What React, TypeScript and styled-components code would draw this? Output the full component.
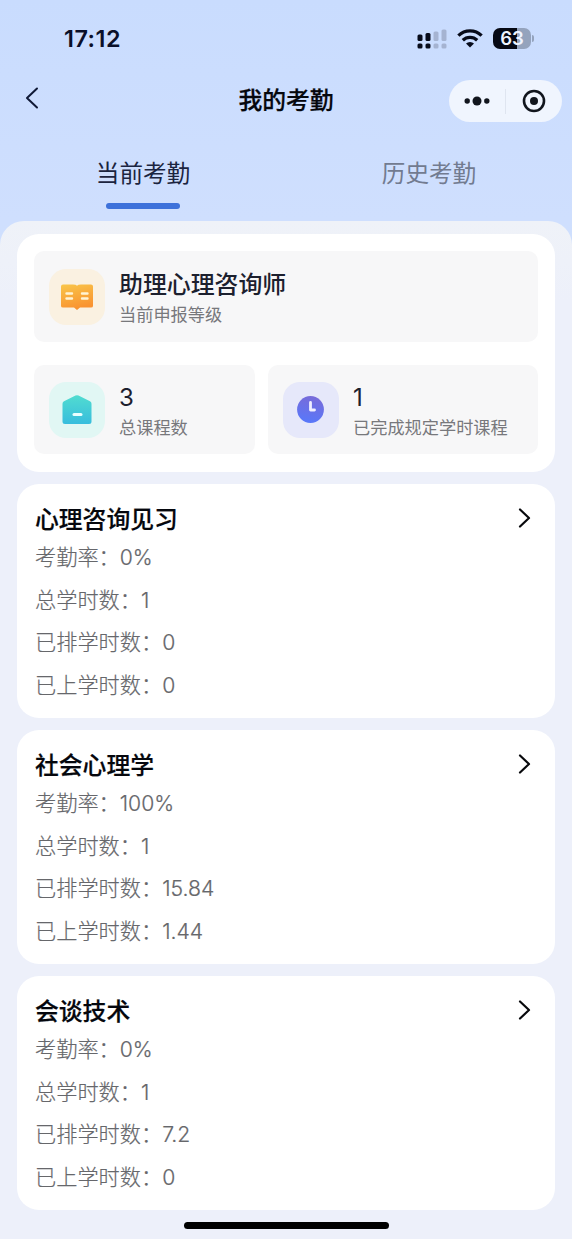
import React from "react";
import styled, { createGlobalStyle } from "styled-components";

const GlobalStyle = createGlobalStyle`
  * { box-sizing: border-box; }
  body {
    margin: 0;
    background: #edf0fa;
    font-family: Inter, "Noto Sans CJK SC", sans-serif;
    color: #05070d;
  }
`;

const Screen = styled.div`
  width: 572px;
  height: 1239px;
  overflow: hidden;
  display: flex;
  flex-direction: column;
  background: linear-gradient(180deg, #c9dcfe 0, #cfdffe 220px, #cfe0fe 260px);
`;

const StatusBar = styled.header`
  height: 76px;
  flex: none;
  display: flex;
  align-items: center;
  justify-content: space-between;
  padding: 1px 38px 0 64px;
`;

const Time = styled.span`
  font-size: 23.4px;
  font-weight: 600;
  letter-spacing: 0.5px;
  color: #0a1029;
`;

const StatusIcons = styled.div`
  display: flex;
  align-items: center;
  gap: 10px;
`;

const NavBar = styled.nav`
  height: 50px;
  flex: none;
  display: grid;
  grid-template-columns: 1fr auto 1fr;
  align-items: center;
  padding: 0 10px 0 24px;
`;

const BackIcon = styled.svg`
  margin-top: -6px;
`;

const PageTitle = styled.h1`
  margin: 0 14px 0 0;
  font-size: 23.8px;
  line-height: 36px;
  font-weight: 500;
  -webkit-text-stroke: 0.25px currentColor;
`;

const Capsule = styled.div`
  justify-self: end;
  width: 113px;
  height: 42px;
  border-radius: 21px;
  background: #f0f5fe;
  display: grid;
  grid-template-columns: 1fr 1px 1fr;
  align-items: center;
  justify-items: center;
`;

const CapsuleDivider = styled.span`
  width: 1px;
  height: 25px;
  background: #dfe5f0;
`;

const Tabs = styled.div`
  height: 95px;
  flex: none;
  display: grid;
  grid-template-columns: 1fr 1fr;
`;

const Tab = styled.div<{ $active?: boolean }>`
  display: flex;
  flex-direction: column;
  align-items: center;
  padding-top: 30px;
  gap: 11px;
  font-size: 23.6px;
  line-height: 36px;
  color: ${(p) => (p.$active ? "#1b2440" : "#727b90")};

  &::after {
    content: "";
    width: 74px;
    height: 6px;
    border-radius: 3px;
    background: ${(p) => (p.$active ? "#3d71da" : "transparent")};
  }
`;

const Panel = styled.main`
  flex: 1;
  display: flex;
  flex-direction: column;
  gap: 12px;
  padding: 13px 17px 0;
  border-radius: 24px 24px 0 0;
  background: linear-gradient(180deg, #eff2f8 0, #edf0fa 80px);
`;

const Card = styled.section`
  flex: none;
  height: 234px;
  border-radius: 22px;
  background: #fff;
  padding: 16px 18px;
`;

const SummaryCard = styled(Card)`
  height: 238px;
  padding: 17px 17px 18px;
  display: grid;
  grid-template-columns: 221px 1fr;
  grid-template-rows: 91px 89px;
  column-gap: 13px;
  row-gap: 23px;
`;

const Tile = styled.div<{ $wide?: boolean }>`
  grid-column: ${(p) => (p.$wide ? "1 / -1" : "auto")};
  display: flex;
  align-items: center;
  gap: 14px;
  padding-left: 15px;
  border-radius: 10px;
  background: #f7f7f8;
`;

const IconBox = styled.div<{ $bg: string }>`
  width: 56px;
  height: 56px;
  flex: none;
  border-radius: 17px;
  background: ${(p) => p.$bg};
  display: flex;
  align-items: center;
  justify-content: center;
`;

const TileText = styled.div`
  display: flex;
  flex-direction: column;
  white-space: nowrap;
  padding-top: 2px;
`;

const TileValue = styled.strong<{ $numeric?: boolean }>`
  font-size: ${(p) => (p.$numeric ? 24 : 23.9)}px;
  font-weight: ${(p) => (p.$numeric ? 400 : 500)};
  line-height: 34px;
  color: #1c202e;
`;

const TileLabel = styled.span`
  font-size: 17.2px;
  line-height: 26px;
  color: #77787c;
`;

const CardHead = styled.div`
  display: flex;
  align-items: center;
  justify-content: space-between;
  height: 36px;
  padding-right: 6px;
`;

const CardTitle = styled.h2`
  margin: 0;
  padding-top: 3px;
  font-size: 23.8px;
  line-height: 36px;
  font-weight: 500;
  -webkit-text-stroke: 0.2px currentColor;
`;

const Row = styled.div`
  height: 42.6px;
  line-height: 42.6px;
  font-size: 21.2px;
  font-weight: 300;
  color: #66676b;
  -webkit-text-stroke: 0.2px currentColor;
  white-space: nowrap;
`;

const HomeIndicator = styled.div`
  width: 205px;
  height: 7px;
  border-radius: 4px;
  background: #000;
  align-self: center;
  flex: none;
`;

const Signal = () => (
  <svg width="30" height="20" viewBox="0 0 30 20">
    <g fill="#070b1a">
      <rect x="0.5" y="5.5" width="5" height="6.5" rx="1.5" />
      <rect x="8.5" y="4" width="5" height="8" rx="1.5" />
      <rect x="0.5" y="14.5" width="5" height="5" rx="1.5" />
      <rect x="8.5" y="14.5" width="5" height="5" rx="1.5" />
    </g>
    <g fill="#a5b3d1">
      <rect x="16.5" y="2.5" width="5" height="9.5" rx="1.5" />
      <rect x="24.5" y="0.5" width="5" height="11.5" rx="1.5" />
      <rect x="16.5" y="14.5" width="5" height="5" rx="1.5" />
      <rect x="24.5" y="14.5" width="5" height="5" rx="1.5" />
    </g>
  </svg>
);

const Wifi = () => (
  <svg width="26" height="19" viewBox="0 0 26 19" fill="none" stroke="#070b1a" strokeWidth="3.3">
    <path d="M1.4 6.6a16.5 16.5 0 0 1 23.2 0" />
    <path d="M5.8 11.2a10.4 10.4 0 0 1 14.4 0" />
    <path d="M13 18.6l-4-4.1a5.8 5.8 0 0 1 8 0z" fill="#070b1a" stroke="none" />
  </svg>
);

const BatteryShell = styled.div`
  display: flex;
  align-items: center;
  gap: 1px;

  &::after {
    content: "";
    width: 2px;
    height: 7px;
    border-radius: 0 2px 2px 0;
    background: #94a3bd;
  }
`;

const BatteryBody = styled.div`
  width: 38px;
  height: 21px;
  border-radius: 7px;
  background: linear-gradient(90deg, #060914 0 64%, #94a3bd 64%);
  color: #eef4ff;
  font-size: 18.5px;
  font-weight: 600;
  line-height: 21px;
  text-align: center;
`;

const BookIcon = () => (
  <svg width="34" height="28" viewBox="0 0 34 28">
    <defs>
      <linearGradient id="book" x1="0" y1="0" x2="0.3" y2="1">
        <stop offset="0" stopColor="#f9c649" />
        <stop offset="1" stopColor="#f99331" />
      </linearGradient>
    </defs>
    <path d="M3 1.500h10q3 0 4 1.300Q18 1.500 21 1.500h10q2 0 2 2v19.500q0 1.600-2 1.600H20L17 27l-3-2.400H3q-2 0-2-1.600V3.500q0-2 2-2z" fill="url(#book)" />
    <path d="M6.500 10.500h5.500M6.500 15.500h5.500M22 10.500H27.500M22 15.500H27.500" stroke="#fff4d4" strokeWidth="2.400" strokeLinecap="round" />
  </svg>
);

const HouseIcon = () => (
  <svg width="30" height="30" viewBox="0 0 30 30">
    <defs>
      <linearGradient id="house" x1="0" y1="0" x2="0" y2="1">
        <stop offset="0" stopColor="#51dcd0" />
        <stop offset="1" stopColor="#38bddd" />
      </linearGradient>
    </defs>
    <path d="M13.500 .6q1.500-.8 3 0L28 6.300q1.500.8 1.500 2.400V26.500q0 2.500-2.500 2.500H3Q.5 29 .5 26.500V8.700q0-1.600 1.500-2.400z" fill="url(#house)" />
    <path d="M12 19.500h7" stroke="#e9ffff" strokeWidth="3" strokeLinecap="round" />
  </svg>
);

const ClockIcon = () => (
  <svg width="28" height="28" viewBox="0 0 28 28">
    <defs>
      <linearGradient id="clock" x1="0.6" y1="0" x2="0.4" y2="1">
        <stop offset="0" stopColor="#786bd9" />
        <stop offset="1" stopColor="#5878fa" />
      </linearGradient>
    </defs>
    <circle cx="13.500" cy="13.500" r="13.400" fill="url(#clock)" />
    <path d="M13.500 6.500v7.500H17.500" fill="none" stroke="#f0efff" strokeWidth="2.800" strokeLinecap="round" strokeLinejoin="round" />
  </svg>
);

const Chevron = () => (
  <svg width="13" height="20" viewBox="0 0 13 20" fill="none" stroke="#08090c" strokeWidth="2.200" strokeLinecap="round" strokeLinejoin="round">
    <path d="M2 1.500l9 8.500L2 18.500" />
  </svg>
);

const courses = [
  { name: "心理咨询见习", rate: "0%", total: "1", planned: "0", attended: "0" },
  { name: "社会心理学", rate: "100%", total: "1", planned: "15.84", attended: "1.44" },
  { name: "会谈技术", rate: "0%", total: "1", planned: "7.2", attended: "0" },
];

export default function App() {
  return (
    <>
      <GlobalStyle />
      <Screen>
        <StatusBar>
          <Time>17:12</Time>
          <StatusIcons>
            <Signal />
            <Wifi />
            <BatteryShell>
              <BatteryBody>63</BatteryBody>
            </BatteryShell>
          </StatusIcons>
        </StatusBar>
        <NavBar>
          <BackIcon width="15" height="22" viewBox="0 0 15 22" fill="none" stroke="#101936" strokeWidth="2" strokeLinecap="round" strokeLinejoin="round">
            <path d="M13 1.500L3 11l10 9.500" />
          </BackIcon>
          <PageTitle>我的考勤</PageTitle>
          <Capsule>
            <svg width="26" height="10" viewBox="0 0 26 10" fill="#11151d">
              <circle cx="3.200" cy="5" r="2.700" />
              <circle cx="13" cy="5" r="4.500" />
              <circle cx="22.800" cy="5" r="2.700" />
            </svg>
            <CapsuleDivider />
            <svg width="24" height="24" viewBox="0 0 24 24">
              <circle cx="12" cy="12" r="10" fill="none" stroke="#11151d" strokeWidth="2.600" />
              <circle cx="12" cy="12" r="4" fill="#11151d" />
            </svg>
          </Capsule>
        </NavBar>
        <Tabs>
          <Tab $active>当前考勤</Tab>
          <Tab>历史考勤</Tab>
        </Tabs>
        <Panel>
          <SummaryCard>
            <Tile $wide>
              <IconBox $bg="#faf1e1"><BookIcon /></IconBox>
              <TileText>
                <TileValue>助理心理咨询师</TileValue>
                <TileLabel>当前申报等级</TileLabel>
              </TileText>
            </Tile>
            <Tile>
              <IconBox $bg="#e1f7f4"><HouseIcon /></IconBox>
              <TileText>
                <TileValue $numeric>3</TileValue>
                <TileLabel>总课程数</TileLabel>
              </TileText>
            </Tile>
            <Tile>
              <IconBox $bg="#e6e8fa"><ClockIcon /></IconBox>
              <TileText>
                <TileValue $numeric>1</TileValue>
                <TileLabel>已完成规定学时课程</TileLabel>
              </TileText>
            </Tile>
          </SummaryCard>
          {courses.map((c) => (
            <Card key={c.name}>
              <CardHead>
                <CardTitle>{c.name}</CardTitle>
                <Chevron />
              </CardHead>
              <Row>考勤率：{c.rate}</Row>
              <Row>总学时数：{c.total}</Row>
              <Row>已排学时数：{c.planned}</Row>
              <Row>已上学时数：{c.attended}</Row>
            </Card>
          ))}
          <HomeIndicator />
        </Panel>
      </Screen>
    </>
  );
}
